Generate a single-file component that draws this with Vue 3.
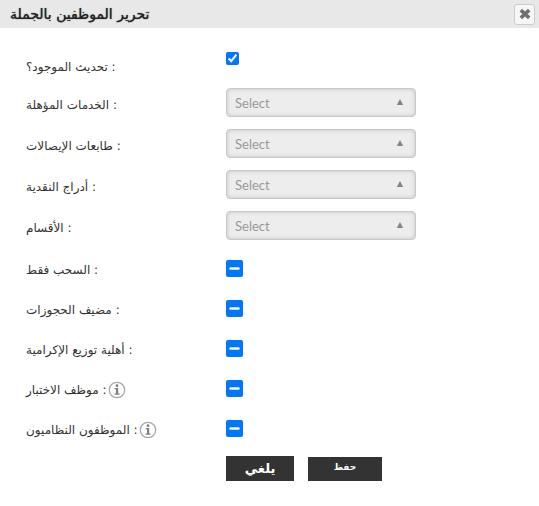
<script setup>
import { ref } from 'vue'

const updateExisting = ref(true)

const lists = ref([
  { id: 'services', label: 'الخدمات المؤهلة', value: '' },
  { id: 'printers', label: 'طابعات الإيصالات', value: '' },
  { id: 'drawers', label: 'أدراج النقدية', value: '' },
  { id: 'departments', label: 'الأقسام', value: '' },
])

const flags = [
  { id: 'draw-only', label: 'السحب فقط', info: false },
  { id: 'host', label: 'مضيف الحجوزات', info: false },
  { id: 'tips', label: 'أهلية توزيع الإكرامية', info: false },
  { id: 'test', label: 'موظف الاختبار', info: true },
  { id: 'regular', label: 'الموظفون النظاميون', info: true },
]
</script>

<template>
  <section class="dialog">
    <header class="bar">
      <h1 class="title">تحرير الموظفين بالجملة</h1>
      <button class="close" type="button">
        <svg viewBox="0 0 12 12" width="12" height="12" aria-hidden="true">
          <path d="M1.8 2.2 10.2 9.8M10.2 2.2 1.8 9.8" stroke="#707070" stroke-width="3.6" />
        </svg>
      </button>
    </header>

    <form class="form" @submit.prevent>
      <div class="row first">
        <label class="label" for="update">تحديث الموجود؟ :</label>
        <input id="update" v-model="updateExisting" class="check" type="checkbox" />
      </div>

      <div v-for="list in lists" :key="list.id" class="row pick">
        <label class="label" :for="list.id">{{ list.label }} :</label>
        <div class="select-wrap">
          <select :id="list.id" v-model="list.value" class="select">
            <option value="">Select</option>
          </select>
          <svg class="arrow" viewBox="0 0 8 6" width="8" height="6" aria-hidden="true">
            <path d="M4 0 7.2 6H.8Z" fill="#858585" />
          </svg>
        </div>
      </div>

      <div class="flags">
        <div v-for="flag in flags" :key="flag.id" class="row flag">
          <div class="label-group">
            <label class="label" :for="flag.id">{{ flag.label }} :</label>
            <svg v-if="flag.info" viewBox="0 0 18 18" width="18" height="18" aria-hidden="true">
              <circle cx="9" cy="9" r="7.7" fill="#fff" stroke="#a8a8a8" stroke-width="1.3" />
              <circle cx="9" cy="4.7" r="1.4" fill="#808080" />
              <path d="M6.6 7H10.2V12.6H11.6V13.8H6.6V12.6H8V8.2H6.6Z" fill="#808080" />
            </svg>
          </div>
          <input :id="flag.id" class="check large" type="checkbox" :indeterminate="true" />
        </div>
      </div>

      <div class="actions">
        <button class="btn cancel" type="button">يلغي</button>
        <button class="btn save" type="submit">حفظ</button>
      </div>
    </form>
  </section>
</template>

<style>
body {
  background: #fff;
}
</style>

<style scoped>
.dialog {
  color: #333;
  font-family: "DejaVu Sans", sans-serif;
  font-size: 12px;
}
.bar {
  display: flex;
  align-items: center;
  justify-content: space-between;
  box-sizing: border-box;
  height: 28px;
  padding: 0 4px 0 10px;
  background: #e8e8e8;
}
.title {
  margin: 0;
  color: #222;
  font-size: 14px;
  font-weight: 400;
  line-height: 20px;
  text-shadow: 0 0 1px #222;
}
.close {
  display: flex;
  align-items: center;
  justify-content: center;
  width: 21px;
  height: 21px;
  padding: 0;
  border: 1px solid #ccc;
  border-radius: 3px;
  background: #f6f6f6;
}
.form {
  padding: 0 26px;
}
.row {
  display: grid;
  grid-template-columns: 200px 1fr;
  align-items: center;
}
.first {
  height: 54px;
  align-items: start;
  padding-top: 24px;
  box-sizing: border-box;
}
.first .label {
  padding-top: 6px;
}
.pick {
  height: 41px;
}
.pick .label,
.label-group {
  padding-top: 4px;
}
.label {
  line-height: 18px;
}
.label-group {
  display: flex;
  align-items: center;
  gap: 1px;
}
.select-wrap {
  position: relative;
  width: 190px;
}
.select {
  display: block;
  appearance: none;
  box-sizing: border-box;
  width: 100%;
  height: 29px;
  padding: 0 8px;
  border: 1px solid #c8c8c8;
  border-radius: 4px;
  background: #ededed;
  box-shadow: inset 0 0 4px #c4c4c4;
  color: #999;
  font-family: Lato, sans-serif;
  font-size: 13px;
}
.arrow {
  position: absolute;
  top: 11px;
  right: 12px;
  pointer-events: none;
}
.flags {
  padding-top: 2px;
}
.flag {
  height: 40px;
}
.check {
  width: 13px;
  height: 13px;
  margin: 0;
}
.large {
  width: 17px;
  height: 17px;
}
.actions {
  display: flex;
  align-items: flex-end;
  gap: 14px;
  padding: 8px 0 24px 200px;
}
.btn {
  padding: 0;
  border: 0;
  background: #333;
  color: #fff;
  font-family: inherit;
  font-weight: 700;
}
.cancel {
  width: 68px;
  height: 25px;
  font-size: 13px;
}
.save {
  width: 74px;
  height: 24px;
  padding-bottom: 4px;
  font-size: 9px;
}
</style>
